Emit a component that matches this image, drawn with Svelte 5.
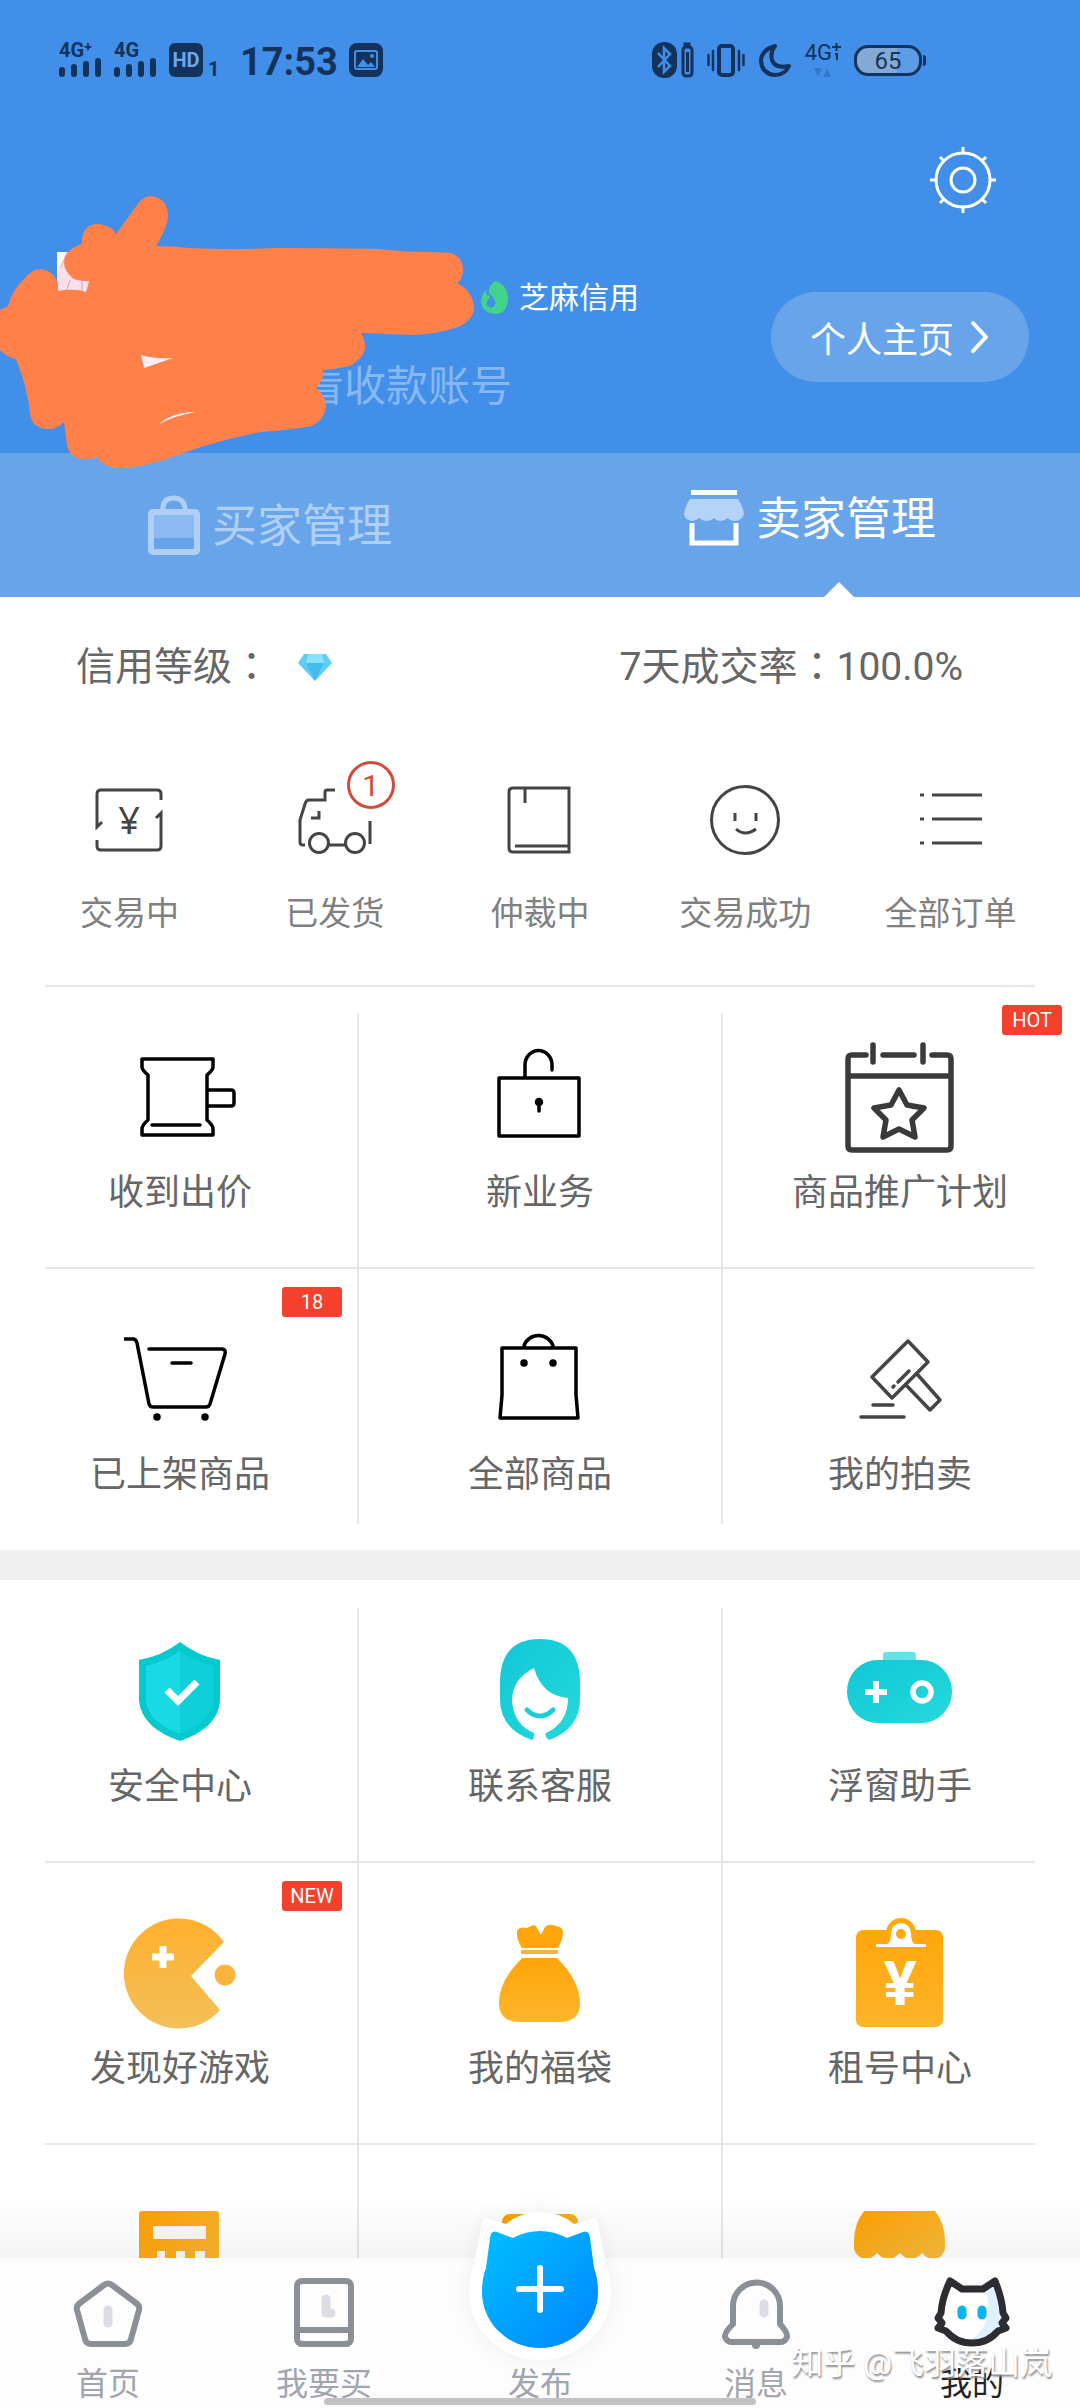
<script>
  let activeTab = $state('seller');
  let activeNav = $state('mine');

  const orders = [
    { icon: 'trading', label: '交易中' },
    { icon: 'shipped', label: '已发货', count: 1 },
    { icon: 'book', label: '仲裁中' },
    { icon: 'smile', label: '交易成功' },
    { icon: 'list', label: '全部订单' }
  ];

  const business = [
    [
      { icon: 'gavel', label: '收到出价' },
      { icon: 'lock', label: '新业务' },
      { icon: 'calendar', label: '商品推广计划', badge: 'HOT' }
    ],
    [
      { icon: 'cart', label: '已上架商品', badge: '18' },
      { icon: 'bag', label: '全部商品' },
      { icon: 'auction', label: '我的拍卖' }
    ]
  ];

  const services = [
    [
      { icon: 'shield', label: '安全中心' },
      { icon: 'support', label: '联系客服' },
      { icon: 'gamepad', label: '浮窗助手' }
    ],
    [
      { icon: 'pacman', label: '发现好游戏', badge: 'NEW' },
      { icon: 'pouch', label: '我的福袋' },
      { icon: 'clipboard', label: '租号中心' }
    ],
    [{ icon: 'calculator' }, { icon: 'card' }, { icon: 'awning' }]
  ];

  const navItems = [
    { id: 'home', label: '首页' },
    { id: 'buy', label: '我要买' },
    { id: 'publish', label: '发布' },
    { id: 'message', label: '消息' },
    { id: 'mine', label: '我的' }
  ];

  // 80 x 80
  const orderIcons = {
    trading: `<path d="M71 20V14Q71 10 67 10H11Q7 10 7 14V47L12 42M7 60V66Q7 70 11 70H67Q71 70 71 66V33L66 38"/><text x="39" y="54" font-family="Noto Sans" font-size="38" text-anchor="middle" fill="#444" stroke="none">¥</text>`,
    shipped: `<path d="M40 10H32Q30 10 30 12V20H14Q11 20 10 24L5 40V62Q5 65 8 65H10M24 31V38H16M75 41V64M34 65H51"/><circle cx="24" cy="63" r="9.5"/><circle cx="60" cy="63" r="9.5"/>`,
    book: `<path d="M69 72H13Q9 72 9 68V12Q9 8 13 8H69ZM25 8V23M15 66H69"/>`,
    smile: `<circle cx="40" cy="40" r="33.5"/><path d="M30 33V41M51 33V41M31 49Q40 57 51 49"/>`,
    list: `<path d="M10 15H14M22 15H72M10 39H14M22 39H72M10 63H14M22 63H72"/>`
  };

  // 112 x 112
  const gridIcons = {
    gavel: `<g stroke="#000" stroke-width="3.5"><path d="M18 18H89V26Q89 29 83 34V79Q89 84 89 88V94H18V88Q18 84 24 79V34Q18 29 18 26ZM83 49H107Q110 49 110 52V62Q110 65 107 65H83M28 84H76"/></g>`,
    lock: `<g stroke="#000" stroke-width="3.5"><path d="M15 37H95V95H15ZM41 37V24A13 14 0 0 1 68 24V29M55 62V70"/><circle cx="55" cy="61" r="2.5" fill="#000"/></g>`,
    calendar: `<g stroke="#3a3a3a" stroke-width="5.5"><path d="M22 14H8Q4 14 4 18V105Q4 109 8 109H103Q107 109 107 105V18Q107 14 103 14H88M39 14H70M29 4V21M79 4V21M4 35H107"/><path d="M55 49L63 64L80 67L68 79L71 96L55 88L39 96L42 79L30 67L47 64Z"/></g>`,
    cart: `<g stroke="#000" stroke-width="3.5"><path d="M0 16H9Q12 16 13 20L25 81Q26 84 29 84H82Q85 84 86 81L101 31Q102 26 98 26H25M48 40H67"/><circle cx="33" cy="94" r="2" fill="#000"/><circle cx="81" cy="94" r="2" fill="#000"/></g>`,
    bag: `<g stroke="#000" stroke-width="3.5"><path d="M18 25H92V72L94 95H16L18 72ZM40 25V23A15 14 0 0 1 69 23V25"/><circle cx="40" cy="40" r="2" fill="#000"/><circle cx="69" cy="40" r="2" fill="#000"/></g>`,
    auction: `<g stroke="#444" stroke-width="3.5"><path d="M64 18L84 39L48 75L28 54ZM73 51L96 77L86 87L62 62M65 48L54 59M50 63L49 64M29 82H49M17 94H60"/></g>`,
    shield: `<path fill="#06c8cf" d="M56 7Q74 21 96 25V66Q94 93 56 106Q18 93 15 66V25Q38 21 56 7Z"/><path fill="#17dae2" d="M56 16Q40 27 22 31V66Q25 88 56 99Z"/><path fill="#0fd0d8" d="M56 16Q72 27 89 31V66Q87 88 56 99Z"/><path d="M43 55L54 66L73 47" stroke="#fff" stroke-width="7" stroke-linecap="butt" stroke-linejoin="miter"/>`,
    support: `<path fill="url(#teal)" d="M48 105Q16 94 16 64V48Q16 4 56 4Q96 4 96 48V64Q96 94 65 105Q60 101 62 98Q84 88 84 63Q58 61 50 33Q28 44 28 66Q30 90 50 98Q51 102 48 105Z"/><path d="M43 75Q56 87 69 75" stroke="#19cfd6" stroke-width="5"/>`,
    gamepad: `<rect x="39" y="17" width="33" height="16" rx="3" fill="#66e3e4"/><rect x="3" y="25" width="105" height="63" rx="31" fill="url(#teal)"/><path d="M21 57H43M32 46V68" stroke="#fff" stroke-width="6" stroke-linecap="butt"/><circle cx="78" cy="57" r="9" stroke="#fff" stroke-width="5.5"/>`,
    pacman: `<path fill="url(#sand)" d="M100 25A55 55 0 1 0 96 93L67 59Z"/><circle cx="101" cy="58" r="10.5" fill="#fcb33c"/><path d="M28 40H50M39 29V51" stroke="#fff" stroke-width="7" stroke-linecap="butt"/>`,
    pouch: `<path fill="#fea60c" d="M38 31Q32 22 33 14Q35 9 43 11Q49 7 52 9L57 18L61 10Q65 6 72 9Q79 10 79 15Q79 22 74 31Z"/><rect x="37" y="33" width="37" height="4" fill="#f5b53c"/><path fill="url(#amber)" d="M38 41H73Q96 64 96 86Q96 105 76 105H36Q15 105 15 86Q15 64 38 41Z"/>`,
    clipboard: `<circle cx="57" cy="16" r="15" fill="#ffaa08"/><rect x="12" y="13" width="87" height="97" rx="7" fill="url(#amber)"/><path fill="#fff" d="M32 30V27H43Q47 26 47 16A10 10 0 0 1 67 16Q67 26 71 27H82V30Z"/><circle cx="57" cy="17" r="5" fill="#ffaa08"/><text x="56" y="88" font-family="Roboto" font-weight="700" font-size="62" text-anchor="middle" fill="#fff">¥</text>`,
    calculator: `<rect x="15" y="12" width="80" height="95" rx="3" fill="url(#orange)"/><path fill="#f8f8f8" d="M29 27H82V40H29ZM33 52H41V62H33ZM52 52H61V62H52ZM71 52H81V62H71Z"/>`,
    card: `<rect x="18" y="15" width="76" height="80" rx="8" fill="url(#orange)"/>`,
    awning: `<path fill="url(#orange)" d="M20 12H91Q101 25 101 42V50Q98 60 89 60Q83 60 78 54Q73 60 67 60Q61 60 56 54Q50 60 44 60Q38 60 33 54Q28 60 21 60Q12 58 10 50V42Q10 25 20 12Z"/>`
  };

  // 80 x 80
  const navIcons = {
    home: `<path stroke="#8b9097" d="M36 13Q40 10 44 13L68 31Q72 34 71 38L63 67Q62 72 57 72H23Q18 72 17 67L9 38Q8 34 12 31Z"/><path stroke="#dcdce4" stroke-width="9" d="M40 38V51"/>`,
    buy: `<rect stroke="#8b9097" x="13" y="9" width="54" height="63" rx="5"/><path stroke="#8b9097" d="M13 58H67"/><path stroke="#dcdce4" stroke-width="9" d="M42 27V41H47"/>`,
    message: `<path stroke="#8b9097" d="M17 52V34A23 23 0 0 1 64 34V52Q72 61 71 65Q69 70 65 70H15Q11 70 9 65Q8 61 17 52Z"/><circle cx="40" cy="73" r="4" fill="#8b9097"/><path stroke="#dcdce4" stroke-width="9" d="M48 32V41"/>`,
    mine: `<path fill="#fff" d="M18 9L30 17H51L63 9Q70 26 71 41L74 46L70 51L74 56L66 59Q56 71 40 71Q24 71 14 59L6 56L10 51L6 46L9 41Q10 26 18 9Z"/><path fill="#dff0ff" d="M54 19L62 13Q67 26 68 42L66 57Q56 68 40 67Q62 52 54 19Z"/><path stroke="#2b2d30" stroke-width="7" d="M18 9L30 17H51L63 9Q70 26 71 41L74 46L70 51L74 56L66 59Q56 71 40 71Q24 71 14 59L6 56L10 51L6 46L9 41Q10 26 18 9Z"/><path stroke="#0cb2f5" stroke-width="9" d="M30 38V43M50 38V43"/>`
  };
</script>

<svg class="defs" width="0" height="0" aria-hidden="true">
  <defs>
    <linearGradient id="teal" x1="0" y1="0" x2="1" y2="1">
      <stop offset="0" stop-color="#12c6d6" />
      <stop offset="1" stop-color="#25d9dc" />
    </linearGradient>
    <linearGradient id="sand" x1="0" y1="0" x2="0" y2="1">
      <stop offset="0" stop-color="#ffb02e" />
      <stop offset="1" stop-color="#f3bf58" />
    </linearGradient>
    <linearGradient id="amber" x1="0" y1="0" x2="0" y2="1">
      <stop offset="0" stop-color="#ffa60a" />
      <stop offset="1" stop-color="#fdb52a" />
    </linearGradient>
    <linearGradient id="orange" x1="0" y1="0" x2="1" y2="1">
      <stop offset="0" stop-color="#ff9f00" />
      <stop offset="1" stop-color="#f5bc3c" />
    </linearGradient>
    <linearGradient id="publish" x1="0" y1="0" x2="1" y2="1">
      <stop offset="0" stop-color="#00c0ff" />
      <stop offset="1" stop-color="#0084ff" />
    </linearGradient>
  </defs>
</svg>

{#snippet signal(label)}
  <div class="signal">
    <span>{label}</span>
    <svg width="44" height="20" viewBox="0 0 44 20" stroke="#14335c" stroke-width="6" stroke-linecap="round">
      <path d="M3 12V16M15 9V16M27 6V16M39 3V16" />
    </svg>
  </div>
{/snippet}

{#snippet gridSection(rows)}
  <div class="grid">
    {#each rows as row}
      <div class="row">
        {#each row as item}
          <a class="cell" href="#{item.icon}" aria-label={item.label ?? item.icon}>
            <svg width="112" height="112" viewBox="0 0 112 112" fill="none" stroke-linecap="round" stroke-linejoin="round">
              {@html gridIcons[item.icon]}
            </svg>
            {#if item.label}<span class="label">{item.label}</span>{/if}
            {#if item.badge}<span class="badge">{item.badge}</span>{/if}
          </a>
        {/each}
      </div>
    {/each}
  </div>
{/snippet}

<div class="app">
  <header>
    <div class="status">
      <div class="status-group">
        {@render signal('4G⁺')}
        {@render signal('4G')}
        <span class="hd">HD</span>
        <span class="sim">1</span>
        <time>17:53</time>
        <svg width="34" height="34" viewBox="0 0 34 34">
          <rect width="34" height="34" rx="8" fill="#14335c" />
          <rect x="6" y="8" width="22" height="18" rx="2" fill="none" stroke="#418fe9" stroke-width="2" />
          <path d="M8 24L14 16L19 22L22 19L26 24Z" fill="#418fe9" />
          <circle cx="23" cy="13" r="2" fill="#418fe9" />
        </svg>
      </div>
      <div class="status-group right">
        <svg width="42" height="36" viewBox="0 0 42 36" fill="none">
          <rect x="0" y="0" width="25" height="36" rx="12" fill="#14335c" />
          <path d="M6 11L18 24L12 30V6L18 12L6 25" stroke="#418fe9" stroke-width="2.5" />
          <path d="M33 4V2H37V4" stroke="#14335c" stroke-width="3" />
          <rect x="31" y="5" width="9" height="29" rx="3" stroke="#14335c" stroke-width="3" />
          <path d="M35.5 10V30" stroke="#14335c" stroke-width="3" />
        </svg>
        <svg width="38" height="36" viewBox="0 0 38 36" fill="none" stroke="#14335c" stroke-linecap="round">
          <rect x="12" y="4" width="14" height="29" rx="3" stroke-width="4" />
          <path d="M6 9V28M1.5 13V23M32 9V28M36.5 13V23" stroke-width="2.5" />
        </svg>
        <svg width="34" height="36" viewBox="0 0 34 36" fill="none" stroke="#14335c" stroke-width="4" stroke-linejoin="round">
          <path d="M17 4Q3 8 3 19Q4 32 17 33Q27 33 31 24Q17 27 14 18Q12 10 17 4Z" />
        </svg>
        <div class="net">
          <div class="net-type">
            <span>4G</span>
            <svg width="9" height="18" viewBox="0 0 9 18" fill="none" stroke="#14335c" stroke-width="2"><path d="M0 5H9M4.500 1V9M3 12H5V18" /></svg>
          </div>
          <svg width="18" height="10" viewBox="0 0 18 10" fill="#3478c9"><path d="M0 0H8L4 9ZM9 9H17L13 0Z" /></svg>
        </div>
        <div class="battery"><span>65</span></div>
      </div>
    </div>

    <div class="tools">
      <button class="gear" aria-label="设置">
        <svg width="70" height="70" viewBox="0 0 70 70" fill="none" stroke="#fff" stroke-width="3">
          <circle cx="35" cy="35" r="27" />
          <circle cx="35" cy="35" r="12" />
          <path d="M35 8V2M35 62V68M8 35H2M62 35H68M16 16L12 12M54 16L58 12M16 54L12 58M54 54L58 58" />
        </svg>
      </button>
    </div>

    <div class="profile">
      <div class="who">
        <div class="credit">
          <svg width="28" height="34" viewBox="0 0 28 34">
            <path d="M14 0Q27 4 27 18Q26 33 14 33Q1 32 0 20Q1 12 6 8Q3 16 9 14Q5 7 14 0Z" fill="#43d48b" />
            <path d="M9 13Q16 20 14 24Q12 28 8 26Q4 24 6 20Q9 18 9 13Z" fill="#418fe9" />
          </svg>
          <span>芝麻信用</span>
        </div>
        <div class="account">看收款账号</div>
      </div>
      <button class="homepage">
        <span>个人主页</span>
        <svg width="20" height="34" viewBox="0 0 20 34" fill="none" stroke="#fff" stroke-width="4" stroke-linecap="round" stroke-linejoin="round">
          <path d="M3 3L16 17L3 31" />
        </svg>
      </button>
    </div>

    <svg class="scribble" width="480" height="280" viewBox="0 190 480 280" aria-hidden="true">
      <path d="M57 252H92V292H57Z" fill="#f9dfe9" />
      <path d="M57 252H66L57 275Z" fill="#fff" />
      <path d="M60 268L68 252M66 292L70 280M82 292V280" stroke="#e3a0bd" stroke-width="1" fill="none" />
      <path
        d="M135 208Q142 196 151 196Q168 198 168 217Q167 228 156 246Q172 246 189 248Q230 250 274 248Q340 248 379 249Q405 252 425 252Q440 252 450 253Q462 256 463 268Q463 280 457 283Q474 292 474 309Q472 322 455 328Q436 334 412 335L361 333Q366 342 365 349Q363 358 350 366Q336 369 323 370Q325 378 316 388Q326 396 326 407Q324 421 311 426Q290 430 261 432Q220 440 189 451Q140 470 115 468Q101 465 97 457Q88 460 82 459Q70 458 67 445L64 422Q56 430 46 429Q31 427 30 413Q28 390 16 359Q8 358 0 350V310L8 306Q12 290 25 278Q32 269 42 269Q53 271 58 283V291Q75 288 86 292Q88 286 89 281Q80 281 74 279Q64 272 64 262Q65 249 82 244Q81 224 99 224Q112 226 116 234Z"
        fill="#ff8049"
      />
      <path d="M141 355Q155 359 173 358L144 368Z" fill="#fdeef4" />
      <path d="M159 424Q172 412 196 412Q177 415 159 424Z" fill="#fdeef4" />
    </svg>
  </header>

  <div class="tabs" role="tablist">
    <button role="tab" aria-selected={activeTab === 'buyer'} class:active={activeTab === 'buyer'} onclick={() => (activeTab = 'buyer')}>
      <svg width="52" height="60" viewBox="0 0 52 60" fill="none">
        <path d="M15 16V12Q16 3 26 3Q35 3 37 12V16" stroke="currentColor" stroke-width="5" />
        <rect x="6" y="19" width="40" height="24" fill="currentColor" opacity=".5" />
        <rect x="3" y="17" width="46" height="40" rx="2" stroke="currentColor" stroke-width="6" />
      </svg>
      <span>买家管理</span>
    </button>
    <button role="tab" aria-selected={activeTab === 'seller'} class:active={activeTab === 'seller'} onclick={() => (activeTab = 'seller')}>
      <svg width="60" height="56" viewBox="0 0 60 56" fill="none">
        <path d="M7 0H53V5H7Z" fill="currentColor" />
        <path d="M6 9H54Q59 16 60 24Q58 30 52 31Q46 31 44 28Q40 31 37 31Q32 31 30 28Q27 31 22 31Q18 31 15 28Q12 31 8 31Q1 30 0 24Q1 16 6 9Z" fill="#b4d3f7" />
        <path d="M8 33V53H52V33" stroke="currentColor" stroke-width="5" />
      </svg>
      <span>卖家管理</span>
    </button>
  </div>

  <main>
    <section class="rating">
      <div>
        <span>信用等级<span class="colon">：</span></span>
        <svg width="36" height="28" viewBox="0 0 36 28">
          <path d="M7 1H29L35 10L18 28L1 10Z" fill="#5fcdf5" />
          <path d="M11 1H25L27 10H9Z" fill="#8ae1fd" />
          <path d="M9 10H27L18 28Z" fill="#43bdec" />
        </svg>
      </div>
      <div><span>7天成交率<span class="colon">：</span>100.0%</span></div>
    </section>

    <section class="orders">
      {#each orders as order}
        <a href="#{order.icon}">
          <span class="order-icon">
            <svg width="80" height="80" viewBox="0 0 80 80" fill="none" stroke="#444" stroke-width="3">
              {@html orderIcons[order.icon]}
            </svg>
            {#if order.count}<span class="count">{order.count}</span>{/if}
          </span>
          <span>{order.label}</span>
        </a>
      {/each}
    </section>

    {@render gridSection(business)}
    <div class="gap"></div>
    {@render gridSection(services)}
  </main>

  <nav>
    {#each navItems as item}
      <button class:active={activeNav === item.id} onclick={() => (activeNav = item.id)}>
        {#if item.id === 'publish'}
          <span class="nav-icon"></span>
          <svg class="publish" width="160" height="164" viewBox="0 0 160 164" fill="none">
            <path class="halo" fill="#fff" d="M22 24Q23 17 28 19L46 24Q60 12 80 12Q100 12 114 24L132 19Q137 17 138 24L146 64Q151 78 151 92A71 68 0 0 1 9 92Q9 78 14 64Z" />
            <path fill="url(#publish)" d="M30 38Q31 30 37 32L53 38Q66 31 80 31Q94 31 107 38L123 32Q129 30 130 38L134 68Q138 78 138 92A58 56 0 0 1 22 92Q22 78 26 68Z" />
            <path d="M59 89H101M80 68V110" stroke="#fff" stroke-width="6" stroke-linecap="round" />
          </svg>
        {:else}
          <svg class="nav-icon" width="80" height="80" viewBox="0 0 80 80" fill="none" stroke-width="6" stroke-linecap="round" stroke-linejoin="round">
            {@html navIcons[item.id]}
          </svg>
        {/if}
        <span>{item.label}</span>
      </button>
    {/each}
    <div class="home-indicator"></div>
    <div class="watermark">知乎 @飞羽落山岚</div>
  </nav>
</div>

<style>
  :global(body) {
    margin: 0;
    background: #fff;
  }

  .defs {
    position: absolute;
  }

  .app {
    display: flex;
    flex-direction: column;
    height: 100vh;
    font-family: Roboto, 'Noto Sans CJK SC', sans-serif;
    color: #666;
    overflow: hidden;
  }

  button {
    border: 0;
    padding: 0;
    background: none;
    color: inherit;
    font: inherit;
  }

  a {
    color: inherit;
    text-decoration: none;
  }

  svg {
    display: block;
    flex: none;
  }

  header {
    position: relative;
    z-index: 1;
    flex: none;
    min-height: 412px;
    padding-top: 41px;
    background: #418fe9;
    color: #fff;
  }

  .status {
    display: flex;
    justify-content: space-between;
    height: 38px;
    padding: 0 158px 0 59px;
    color: #14335c;
  }

  .status-group {
    display: flex;
    align-items: center;
    gap: 11px;
  }

  .status-group.right {
    gap: 13px;
  }

  .signal {
    display: flex;
    flex-direction: column;
    justify-content: space-between;
    height: 36px;
    font-size: 20px;
    line-height: 16px;
    font-weight: 700;
  }

  .hd {
    width: 34px;
    height: 34px;
    border-radius: 6px;
    background: #14335c;
    color: #6ba8ee;
    font-size: 20px;
    line-height: 34px;
    font-weight: 700;
    text-align: center;
  }

  .sim {
    align-self: flex-end;
    width: 10px;
    margin-left: -6px;
    font-size: 20px;
    line-height: 20px;
    font-weight: 700;
  }

  time {
    margin: 4px 0 0 11px;
    font-size: 38px;
    line-height: 38px;
    font-weight: 700;
  }

  .net {
    display: flex;
    flex-direction: column;
    align-items: center;
    justify-content: space-between;
    height: 36px;
  }

  .net-type {
    display: flex;
    font-size: 22px;
    line-height: 22px;
  }

  .battery {
    position: relative;
    box-sizing: border-box;
    width: 68px;
    height: 31px;
    border: 3px solid #14335c;
    border-radius: 14px;
    background: linear-gradient(to right, #83a9d6 65%, #5c9be6 65%);
    color: #1c3454;
    font-size: 24px;
    line-height: 26px;
    text-align: center;
  }

  .battery::after {
    content: '';
    position: absolute;
    top: 7px;
    right: -7px;
    width: 3px;
    height: 11px;
    border-radius: 0 3px 3px 0;
    background: #14335c;
  }

  .tools {
    display: flex;
    justify-content: flex-end;
    padding: 66px 82px 0 0;
  }

  .profile {
    display: flex;
    justify-content: space-between;
    align-items: flex-start;
    padding-right: 51px;
  }

  .who {
    padding-top: 63px;
  }

  .credit {
    display: flex;
    align-items: center;
    gap: 10px;
    height: 40px;
    padding-left: 481px;
    font-size: 30px;
    line-height: 40px;
  }

  .account {
    margin-top: 39px;
    padding-left: 302px;
    color: #86b8f3;
    font-size: 42px;
    line-height: 60px;
  }

  .homepage {
    display: flex;
    align-items: center;
    justify-content: center;
    gap: 16px;
    width: 258px;
    height: 90px;
    margin-top: 77px;
    border-radius: 45px;
    background: #68a4ea;
    font-size: 36px;
  }

  .scribble {
    position: absolute;
    left: 0;
    top: 190px;
  }

  .tabs {
    display: flex;
    flex: none;
    height: 144px;
    background: #68a4ea;
  }

  .tabs button {
    position: relative;
    display: flex;
    flex: 1;
    align-items: center;
    justify-content: center;
    gap: 12px;
    color: #b0cff5;
    font-size: 45px;
    line-height: 60px;
  }

  .tabs span {
    padding-top: 4px;
  }

  .tabs button.active {
    padding-bottom: 14px;
    color: #fff;
  }

  .tabs button.active::after {
    content: '';
    position: absolute;
    bottom: 0;
    left: 50%;
    margin-left: 14px;
    border: 15px solid transparent;
    border-top: 0;
    border-bottom-color: #fff;
  }

  main {
    flex: 1;
    min-height: 0;
    overflow-y: auto;
    scrollbar-width: none;
  }

  .rating {
    display: flex;
    align-items: center;
    justify-content: space-between;
    height: 140px;
    padding: 0 117px 0 76px;
    font-size: 39px;
    line-height: 60px;
  }

  .rating div {
    display: flex;
    align-items: center;
  }

  .rating svg {
    margin-left: 26px;
  }

  .colon {
    font-family: 'Noto Sans CJK TC', sans-serif;
    line-height: 1;
  }

  .orders {
    display: grid;
    grid-template-columns: repeat(5, 1fr);
    padding: 43px 27px 52px;
    color: #808080;
    font-size: 33px;
    line-height: 40px;
  }

  .orders a {
    display: flex;
    flex-direction: column;
    align-items: center;
    gap: 34px;
  }

  .order-icon {
    position: relative;
  }

  .count {
    position: absolute;
    left: 52px;
    top: -19px;
    box-sizing: border-box;
    width: 48px;
    height: 48px;
    border: 3px solid #d04c3a;
    border-radius: 50%;
    color: #d04c3a;
    font-size: 30px;
    line-height: 43px;
    text-align: center;
  }

  .grid {
    position: relative;
  }

  .grid::before {
    content: '';
    position: absolute;
    inset: 28px 33.1% 26px;
    border: solid #e6e6e6;
    border-width: 0 2px;
  }

  .row {
    position: relative;
    display: grid;
    grid-template-columns: repeat(3, 1fr);
    height: 282px;
  }

  .row::before {
    content: '';
    position: absolute;
    top: -1px;
    left: 45px;
    right: 45px;
    height: 2px;
    background: #e6e6e6;
  }

  .gap + .grid .row:first-child::before {
    display: none;
  }

  .cell {
    position: relative;
    display: flex;
    flex-direction: column;
    align-items: center;
    gap: 19px;
    padding-top: 55px;
    font-size: 36px;
    line-height: 42px;
  }

  .badge {
    position: absolute;
    top: 19px;
    right: 18px;
    width: 60px;
    height: 30px;
    border-radius: 3px;
    background: #f4402c;
    color: #fff;
    font-size: 20px;
    line-height: 31px;
    text-align: center;
  }

  .gap {
    height: 30px;
    background: #f0f0f0;
  }

  nav {
    position: relative;
    display: grid;
    grid-template-columns: repeat(5, 1fr);
    flex: none;
    height: 150px;
    background: #fdfdfe;
    color: #a2a5af;
    font-size: 32px;
    line-height: 40px;
  }

  nav::before {
    content: '';
    position: absolute;
    bottom: 100%;
    left: 0;
    right: 0;
    height: 60px;
    background: linear-gradient(rgba(40, 40, 70, 0), rgba(40, 40, 70, 0.05));
  }

  nav button {
    position: relative;
    display: flex;
    flex-direction: column;
    align-items: center;
    gap: 12px;
    padding-top: 14px;
  }

  nav button.active {
    color: #222;
  }

  .nav-icon {
    height: 80px;
  }

  .publish {
    position: absolute;
    top: -58px;
    left: 50%;
    margin-left: -80px;
    overflow: visible;
  }

  .halo {
    filter: drop-shadow(0 0 10px rgba(0, 0, 0, 0.06));
  }

  .home-indicator {
    position: absolute;
    bottom: 3px;
    left: 30%;
    right: 30%;
    height: 7px;
    border-radius: 4px;
    background: #c2c2c2;
  }

  .watermark {
    position: absolute;
    right: 28px;
    top: 85px;
    color: #fff;
    font-size: 32px;
    text-shadow: 1px 2px 2px #888;
  }
</style>
